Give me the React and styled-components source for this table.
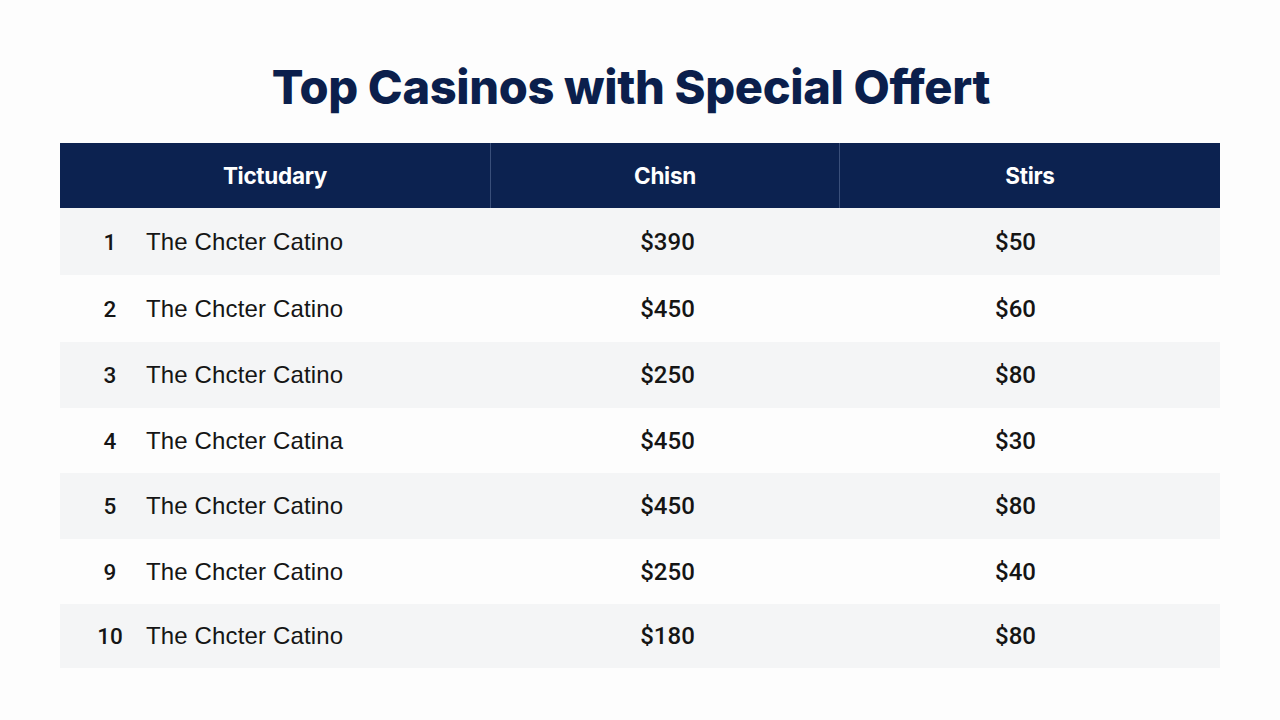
import React from "react";
import styled, { createGlobalStyle } from "styled-components";

const GlobalStyle = createGlobalStyle`
  html, body {
    margin: 0;
    padding: 0;
    background: #fdfdfd;
  }
  body {
    font-family: Inter, "Liberation Sans", sans-serif;
  }
`;

const Page = styled.div`
  width: 1280px;
  height: 720px;
  box-sizing: border-box;
  padding: 56px 60px 0;
  background: #fdfdfd;
`;

const Title = styled.h1`
  margin: 0 0 25px;
  padding-right: 18px;
  text-align: center;
  font-size: 47px;
  line-height: 62px;
  font-weight: 800;
  letter-spacing: -0.35px;
  color: #0b1f4c;
`;

const Table = styled.div`
  display: grid;
  grid-template-columns: 430px 349px 381px;
`;

const HeadCell = styled.div`
  height: 65px;
  display: flex;
  align-items: center;
  justify-content: center;
  background: #0c2250;
  color: #ffffff;
  font-size: 22.5px;
  font-weight: 700;
  letter-spacing: -0.3px;
  border-left: ${(p) => (p.$first ? "none" : "1px solid #3a4f7a")};
`;

const Cell = styled.div`
  height: ${(p) => p.$h}px;
  display: flex;
  align-items: center;
  justify-content: ${(p) => (p.$center ? "center" : "flex-start")};
  background: ${(p) => (p.$shade ? "#f4f5f6" : "#fdfdfd")};
  color: #151515;
  font-family: "Liberation Sans", Arial, sans-serif;
  font-size: 24px;
  letter-spacing: 0.15px;
`;

const Rank = styled.span`
  width: 58px;
  text-align: center;
  margin-left: 21px;
  margin-right: 7px;
  font-family: Roboto, sans-serif;
  font-size: 22.5px;
  font-weight: 500;
  letter-spacing: 0;
`;

const Amount = styled.span`
  font-family: Roboto, sans-serif;
  font-size: 24px;
  font-weight: 500;
  letter-spacing: 0;
  transform: translateX(${(p) => p.$shift || 0}px);
`;

const rows = [
  ["1", "The Chcter Catino", "$390", "$50"],
  ["2", "The Chcter Catino", "$450", "$60"],
  ["3", "The Chcter Catino", "$250", "$80"],
  ["4", "The Chcter Catina", "$450", "$30"],
  ["5", "The Chcter Catino", "$450", "$80"],
  ["9", "The Chcter Catino", "$250", "$40"],
  ["10", "The Chcter Catino", "$180", "$80"],
];

const heights = [67, 67, 66, 65, 66, 65, 64];

export default function App() {
  return (
    <>
      <GlobalStyle />
      <Page>
        <Title>Top Casinos with Special Offert</Title>
        <Table>
          <HeadCell $first>Tictudary</HeadCell>
          <HeadCell>Chisn</HeadCell>
          <HeadCell>Stirs</HeadCell>
          {rows.map((r, i) => {
            const shade = i % 2 === 0;
            const h = heights[i];
            return (
              <React.Fragment key={i}>
                <Cell $shade={shade} $h={h}>
                  <Rank>{r[0]}</Rank>
                  {r[1]}
                </Cell>
                <Cell $shade={shade} $h={h} $center>
                  <Amount $shift={3}>{r[2]}</Amount>
                </Cell>
                <Cell $shade={shade} $h={h} $center>
                  <Amount $shift={-14}>{r[3]}</Amount>
                </Cell>
              </React.Fragment>
            );
          })}
        </Table>
      </Page>
    </>
  );
}
